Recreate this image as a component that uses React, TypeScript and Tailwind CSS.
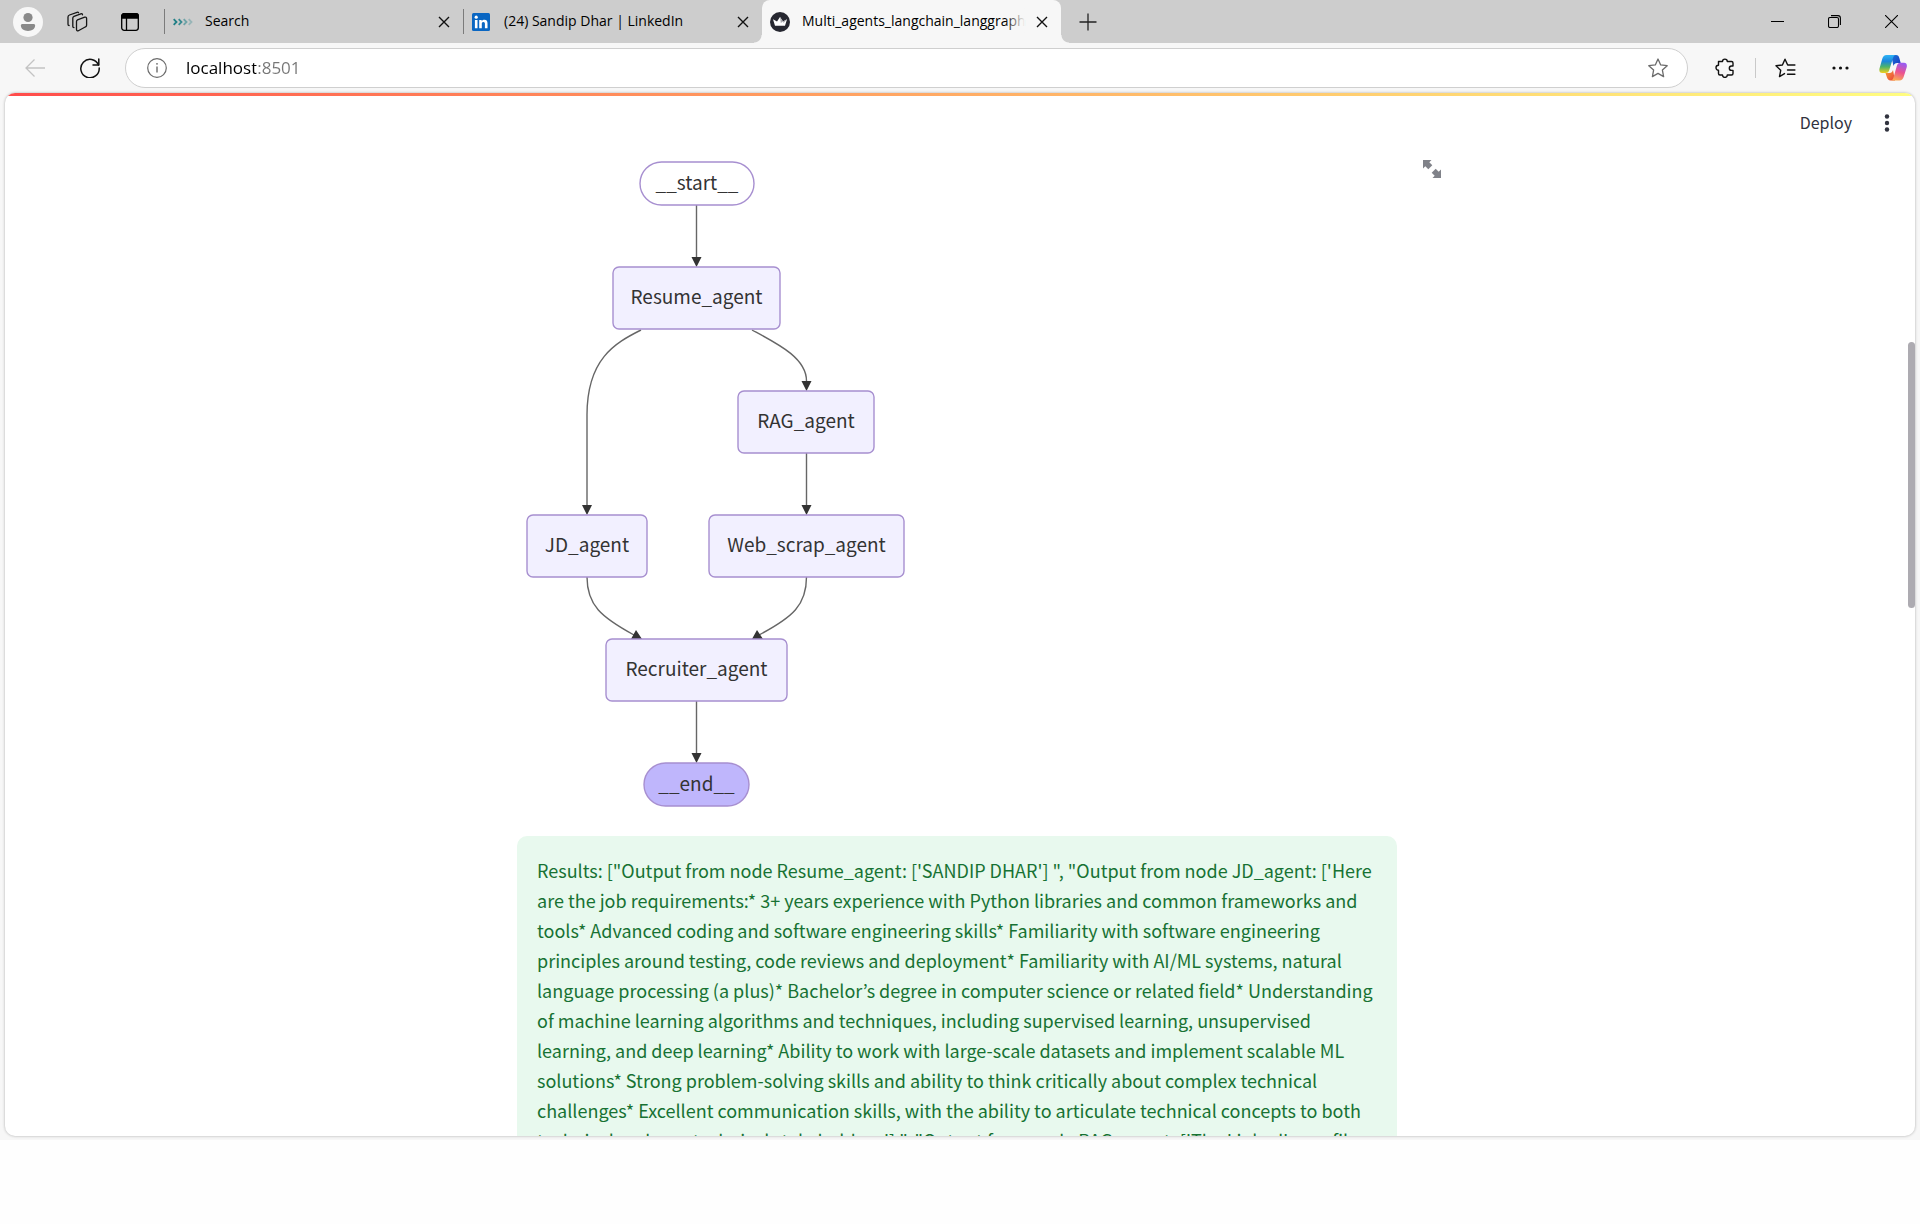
import type { ReactNode } from "react";

const RESULTS =
  "Results: [\"Output from node Resume_agent: ['SANDIP DHAR'] \", \"Output from node JD_agent: ['Here are the job requirements:* 3+ years experience with Python libraries and common frameworks and tools* Advanced coding and software engineering skills* Familiarity with software engineering principles around testing, code reviews and deployment* Familiarity with AI/ML systems, natural language processing (a plus)* Bachelor’s degree in computer science or related field* Understanding of machine learning algorithms and techniques, including supervised learning, unsupervised learning, and deep learning* Ability to work with large-scale datasets and implement scalable ML solutions* Strong problem-solving skills and ability to think critically about complex technical challenges* Excellent communication skills, with the ability to articulate technical concepts to both technical and non-technical stakeholders.'] \", \"Output from node RAG_agent: ['The LinkedIn profile";

function CloseIcon() {
  return (
    <svg width="12" height="12" viewBox="0 0 12 12" fill="none" stroke="#111" strokeWidth="1.4">
      <path d="M1 1l10 10M11 1L1 11" />
    </svg>
  );
}

function ChevronsFavicon() {
  return (
    <svg width="20" height="20" viewBox="0 0 20 20" fill="none" stroke="#1f7f86" strokeWidth="1.8">
      <path d="M.7 7.2l2.8 2.8-2.8 2.8" />
      <path d="M5.7 7.2l2.8 2.8-2.8 2.8" opacity=".85" />
      <path d="M10.7 7.2l2.8 2.8-2.8 2.8" opacity=".55" />
      <path d="M15.7 7.2l2.8 2.8-2.8 2.8" opacity=".3" />
    </svg>
  );
}

function LinkedInFavicon() {
  return (
    <svg width="18" height="18" viewBox="0 0 18 18">
      <rect width="18" height="18" rx="1.5" fill="#0a66c2" />
      <circle cx="4.2" cy="4.2" r="1.6" fill="#fff" />
      <path
        d="M2.9 7h2.6v8.3H2.9zM7.2 7h2.5v1.2c.4-.8 1.4-1.4 2.7-1.4 2.5 0 3.1 1.6 3.1 3.8v4.7h-2.6v-4.2c0-1.1-.2-2.1-1.5-2.1s-1.6.9-1.6 2v4.3H7.2z"
        fill="#fff"
      />
    </svg>
  );
}

function CrownFavicon() {
  return (
    <svg width="20" height="20" viewBox="0 0 20 20">
      <circle cx="10" cy="10" r="10" fill="#262730" />
      <path d="M3 7.2l4 2.3L10 5l3 4.5 4-2.3-2 6.6H5z" fill="#fff" />
      <path d="M10 5l3 4.500-2.200 1.400zM17 7.200l-4 2.300.6 1.400z" fill="#a9a9ae" />
    </svg>
  );
}

function Tab({ icon, title, label, className }: { icon: ReactNode; title: string; label: string; className: string }) {
  return (
    <div className={`flex h-full items-center ${className}`}>
      <button role="tab" className="flex min-w-0 flex-1 items-center text-left">
        <span className="flex w-8 shrink-0">{icon}</span>
        <span className="overflow-hidden pb-0.5 whitespace-nowrap text-[14px] leading-5 text-black">{title}</span>
      </button>
      <button aria-label={label} className="flex h-6 w-6 shrink-0 items-center justify-center">
        <CloseIcon />
      </button>
    </div>
  );
}

function TabStrip() {
  return (
    <header className="flex h-[43px] items-center bg-[#cdcdcd]">
      <button aria-label="Profile" className="ml-[13px] flex">
        <svg width="30" height="30" viewBox="0 0 30 30">
          <circle cx="15" cy="15" r="15" fill="#f7f7f7" />
          <circle cx="15" cy="10.5" r="4.6" fill="#8a8a8a" />
          <path d="M9.500 17h11c1 0 1.600.7 1.600 1.600 0 3.400-3 5.400-7.100 5.400s-7.100-2-7.100-5.400c0-.9.6-1.600 1.600-1.600z" fill="#8a8a8a" />
        </svg>
      </button>
      <button aria-label="Workspaces" className="ml-[23px] flex">
        <svg width="22" height="22" viewBox="0 0 22 22" fill="none" stroke="#151515" strokeWidth="1.3" strokeLinejoin="round" strokeLinecap="round">
          <path d="M11.500 8.800l7.200-2.600c1-.3 1.900.2 1.900 1.200v6.800c0 .7-.4 1.300-1 1.600l-7.200 3.900c-1 .5-1.900 0-1.900-1.100v-8.200c0-.7.4-1.300 1-1.600z" />
          <path d="M16.500 3.800c0-.9-.8-1.300-1.700-1l-6.800 2.500c-.7.300-1.200.9-1.200 1.600v8.600c0 .7.5 1.100 1.200 1.100" />
          <path d="M12.500 1.700c-.3-.5-.9-.6-1.500-.4L3.500 4c-.8.300-1.500 1-1.500 1.900v7.400c0 .7.400 1.200 1.100 1.200" />
        </svg>
      </button>
      <button aria-label="Tab actions" className="ml-[33px] flex">
        <svg width="18" height="18" viewBox="0 0 18 18" fill="none" stroke="#000" strokeWidth="1.300">
          <rect x=".7" y=".7" width="16.600" height="16.600" rx="2.500" />
          <path d="M.7 5V3A2.300 2.300 0 0 1 3 .7h12A2.300 2.300 0 0 1 17.300 3v2z" fill="#000" />
          <path d="M5.500 5v12" />
        </svg>
      </button>
      <span className="ml-[25px] h-[25px] w-px bg-[#7b7b7b]" />
      <Tab icon={<ChevronsFavicon />} title="Search" label="Close Search" className="w-[298px] pl-2 pr-[7px]" />
      <span className="h-[25px] w-px bg-[#7b7b7b]" />
      <Tab icon={<LinkedInFavicon />} title="(24) Sandip Dhar | LinkedIn" label="Close LinkedIn" className="w-[298px] pl-2 pr-[7px]" />
      <div className="relative h-full w-[299px] rounded-t-lg bg-[#f7f7f7]">
        <Tab
          icon={<CrownFavicon />}
          title="Multi_agents_langchain_langgraph"
          label="Close Multi_agents"
          className="pl-2 pr-[7px]"
        />
        <span className="absolute top-2 right-9 h-7 w-5 bg-linear-to-r from-transparent to-[#f7f7f7]" />
        <span className="absolute bottom-0 -left-2 size-2 bg-[radial-gradient(circle_at_0_0,#cdcdcd_7px,#f7f7f7_8px)]" />
        <span className="absolute -right-2 bottom-0 size-2 bg-[radial-gradient(circle_at_100%_0,#cdcdcd_7px,#f7f7f7_8px)]" />
      </div>
      <button aria-label="New tab" className="ml-[18px] flex">
        <svg width="18" height="18" viewBox="0 0 18 18" stroke="#222" strokeWidth="1.300">
          <path d="M9 .5v17M.5 9h17" />
        </svg>
      </button>
      <div className="ml-auto flex items-center gap-11 pr-[22px]">
        <button aria-label="Minimize" className="flex">
          <svg width="13" height="13" viewBox="0 0 13 13" stroke="#000"><path d="M0 6.500h13" /></svg>
        </button>
        <button aria-label="Restore" className="flex">
          <svg width="13" height="13" viewBox="0 0 13 13" fill="none" stroke="#000" strokeWidth="1.100">
            <rect x=".5" y="2.500" width="10" height="10" rx="1.500" />
            <path d="M3 .6h7a2.500 2.500 0 0 1 2.400 2.500V10" />
          </svg>
        </button>
        <button aria-label="Close window" className="flex">
          <svg width="13" height="13" viewBox="0 0 13 13" stroke="#000" strokeWidth="1.100"><path d="M0 0l13 13M13 0L0 13" /></svg>
        </button>
      </div>
    </header>
  );
}

function CopilotLogo() {
  return (
    <svg width="28" height="26" viewBox="0 0 28 26">
      <defs>
        <linearGradient id="cpLeft" x1="0" y1="0" x2="0" y2="1">
          <stop offset="0" stopColor="#2fb4f5" />
          <stop offset=".35" stopColor="#1b86dc" />
          <stop offset=".65" stopColor="#4bb36b" />
          <stop offset="1" stopColor="#f2cf1d" />
        </linearGradient>
        <linearGradient id="cpRight" x1=".6" y1="0" x2=".3" y2="1">
          <stop offset="0" stopColor="#9a5cf0" />
          <stop offset=".5" stopColor="#ec5390" />
          <stop offset="1" stopColor="#fbb04f" />
        </linearGradient>
        <linearGradient id="cpTop" x1="0" y1="0" x2="1" y2="1">
          <stop offset="0" stopColor="#1877d8" />
          <stop offset="1" stopColor="#1c37c0" />
        </linearGradient>
        <linearGradient id="cpBottom" x1="0" y1="0" x2="1" y2="1">
          <stop offset="0" stopColor="#f7a035" />
          <stop offset="1" stopColor="#e8403c" />
        </linearGradient>
      </defs>
      <path d="M12 0h5c2 0 2.800 1.200 3.400 3.200L21.700 8h-3.500c-2 0-3 .8-3.700 2.900z" fill="url(#cpTop)" />
      <path d="M16 25.500h-4.500c-2 0-3-1.200-3.600-3.200L6.500 18h4c2 0 2.800-1 3.500-3z" fill="url(#cpBottom)" />
      <path d="M7.500 0H17c-1.700 0-2.400 1.200-3 3l-3.700 12c-.8 2.400-1.800 3-3.600 3H3.200C.8 18-.1 16.200.5 13.500L3.200 4C4 1.300 5.300 0 7.500 0z" fill="url(#cpLeft)" />
      <path d="M20.500 25.500H11.500c1.700 0 2.400-1.200 3-3l3.300-11.500c.7-2.400 1.800-3.200 3.700-3.200H25c2.400 0 3.300 1.800 2.700 4.500l-2.900 9.300c-.8 2.700-2.100 3.900-4.300 3.900z" fill="url(#cpRight)" />
    </svg>
  );
}

function Toolbar() {
  return (
    <nav className="flex h-[50px] items-center pl-[25px] pr-[13px]">
      <button aria-label="Back" className="flex">
        <svg width="20" height="18" viewBox="0 0 20 18" fill="none" stroke="#c3c3c3" strokeWidth="1.300">
          <path d="M9.500.5L1 9l8.500 8.500M1 9h19" />
        </svg>
      </button>
      <button aria-label="Refresh" className="ml-[35px] flex">
        <svg width="20" height="20" viewBox="0 0 20 20" fill="none" stroke="#111" strokeWidth="1.500" strokeLinecap="round" strokeLinejoin="round">
          <path d="M18.500 7A9.200 9.200 0 1 0 19.200 10" />
          <path d="M18.800 1v5.900h-5.800" />
        </svg>
      </button>
      <div className="ml-[25px] flex h-10 flex-1 items-center rounded-full border border-[#cfcfcf] bg-white pr-[19px] pl-[21px]">
        <button aria-label="Site information" className="flex">
          <svg width="20" height="20" viewBox="0 0 20 20" fill="none" stroke="#6b6b6b" strokeWidth="1.200">
            <circle cx="10" cy="10" r="9.300" />
            <path d="M10 8.500v6" strokeWidth="1.400" />
            <circle cx="10" cy="5.800" r=".9" fill="#6b6b6b" stroke="none" />
          </svg>
        </button>
        <input
          aria-label="Address"
          defaultValue="localhost:8501"
          className="ml-[19px] min-w-0 flex-1 bg-[linear-gradient(90deg,#000_70px,#767676_70px)] bg-clip-text text-[17px] leading-6 text-transparent outline-none"
        />
        <button aria-label="Add to favorites" className="flex">
          <svg width="20" height="20" viewBox="0 0 20 20" fill="none" stroke="#6b6b6b" strokeWidth="1.300" strokeLinejoin="round">
            <path d="M10 1l2.700 5.900 6.500.8-4.800 4.400 1.200 6.500L10 15.400l-5.600 3.200 1.200-6.500L.8 7.700l6.500-.8z" />
          </svg>
        </button>
      </div>
      <button aria-label="Extensions" className="ml-[27px] flex">
        <svg width="20" height="20" viewBox="0 0 20 20" fill="none" stroke="#111" strokeWidth="1.400" strokeLinejoin="round">
          <path d="M3.500 3.500h4a2.400 2.400 0 0 1 4.800 0h4.200a1.500 1.500 0 0 1 1.500 1.500v3h-1.500a2.200 2.200 0 0 0 0 4.400H18V15.500a1.500 1.500 0 0 1-1.500 1.500h-4.200a2.400 2.400 0 0 1-4.800 0h-2.500a1.500 1.500 0 0 1-1.500-1.500v-3.200a2.500 2.500 0 0 1 0-5z" />
        </svg>
      </button>
      <span className="ml-5 h-5 w-px bg-[#c9c9c9]" />
      <button aria-label="Favorites" className="ml-[19px] flex">
        <svg width="21" height="20" viewBox="0 0 21 20" fill="none" stroke="#111" strokeWidth="1.400" strokeLinejoin="round" strokeLinecap="round">
          <path d="M9.500 15.600l-5 3 1.200-6.300L1 7.800l6.400-.8L10 1.200 12.700 7h7.200M12.500 12h7.400M12.500 16.300h7.400" />
        </svg>
      </button>
      <button aria-label="Settings and more" className="ml-9 flex">
        <svg width="17" height="4" viewBox="0 0 17 4" fill="#111">
          <circle cx="2" cy="2" r="1.600" />
          <circle cx="8.500" cy="2" r="1.600" />
          <circle cx="15" cy="2" r="1.600" />
        </svg>
      </button>
      <button aria-label="Copilot" className="ml-[30px] flex">
        <CopilotLogo />
      </button>
    </nav>
  );
}

const NODES = [
  { label: "__start__", x: 123, y: 9, w: 114, h: 43, r: 21.5, fill: "#ffffff" },
  { label: "Resume_agent", x: 96, y: 114, w: 167, h: 62, r: 6, fill: "#f2f0ff" },
  { label: "RAG_agent", x: 221, y: 238, w: 136, h: 62, r: 6, fill: "#f2f0ff" },
  { label: "JD_agent", x: 10, y: 362, w: 120, h: 62, r: 6, fill: "#f2f0ff" },
  { label: "Web_scrap_agent", x: 192, y: 362, w: 195, h: 62, r: 6, fill: "#f2f0ff" },
  { label: "Recruiter_agent", x: 89, y: 486, w: 181, h: 62, r: 6, fill: "#f2f0ff" },
  { label: "__end__", x: 127, y: 610, w: 105, h: 43, r: 21.5, fill: "#bfb6fc" },
];

function AgentGraph() {
  return (
    <svg width="400" height="664" viewBox="0 0 400 664" role="img" aria-label="Agent graph">
      <g fill="none" stroke="#666" strokeWidth="1.400">
        <path d="M179.500 52v52M289.500 300v52M179.500 548v52" />
        <path d="M124 177C98 190 70 206 70 262V352" />
        <path d="M235 177C261 191 289.500 205 289.500 228" />
        <path d="M70 424C70 452 84 464 117 482" />
        <path d="M289.500 424C289.500 452 276 464 242 482" />
      </g>
      <g fill="#333">
        <path d="M174.500 104h10l-5 10zM284.500 228h10l-5 10zM284.500 352h10l-5 10zM65 352h10l-5 10zM174.500 600h10l-5 10z" />
        <path d="M114 486l5-9 6 9zM235 486l5-9 6 9z" />
      </g>
      {NODES.map((n) => (
        <g key={n.label}>
          <rect x={n.x} y={n.y} width={n.w} height={n.h} rx={n.r} fill={n.fill} stroke="#a78fd0" strokeWidth="1.400" />
          <text
            x={n.x + n.w / 2}
            y={n.y + n.h / 2 + 6}
            textAnchor="middle"
            fill="#333"
            className="font-['Trebuchet_MS','Noto_Sans_CJK_KR',sans-serif] text-[19px]"
          >
            {n.label}
          </text>
        </g>
      ))}
    </svg>
  );
}

function StreamlitPage() {
  return (
    <main className="relative mx-[5px] flex min-h-0 flex-1 flex-col overflow-hidden rounded-[10px] bg-white font-['Source_Sans_Pro','Noto_Sans_CJK_KR',sans-serif] shadow-[0_0_3px_rgba(0,0,0,0.3)]">
      <div className="h-[3px] shrink-0 bg-linear-to-r from-[#ff4b4b] to-[#fffd80]" />
      <div className="flex h-[54px] shrink-0 items-center justify-end pr-[25px]">
        <button className="pb-0.5 text-[16px] leading-6 text-[#31333f]">Deploy</button>
        <button aria-label="Main menu" className="ml-8 flex">
          <svg width="6" height="18" viewBox="0 0 6 18" fill="#31333f">
            <circle cx="3" cy="2.500" r="2.200" />
            <circle cx="3" cy="9" r="2.200" />
            <circle cx="3" cy="15.500" r="2.200" />
          </svg>
        </button>
      </div>
      <div className="mx-auto w-full max-w-[886px] pt-[3px] pr-[6px]">
        <div className="relative">
          <AgentGraph />
          <button aria-label="View fullscreen" className="absolute top-[7px] -right-11 flex">
            <svg width="18" height="18" viewBox="0 0 18 18" fill="#808289">
              <path d="M0 0h8.500L6.300 2.300 9.300 5.300 5.300 9.300 2.300 6.300 0 8.500zM18 18H9.500l2.200-2.300-3-3 4-4 3 3L18 9.500z" />
            </svg>
          </button>
        </div>
        <p className="mt-[19px] rounded-[10px] bg-[#e8f9ee] px-5 pt-[19px] pb-5 text-[18px] leading-[30px] text-[#177233]">{RESULTS}</p>
      </div>
      <span className="absolute top-[249px] right-0 h-[266px] w-[7px] rounded-full bg-[#adabb1]" />
    </main>
  );
}

export default function App() {
  return (
    <div className="flex h-screen flex-col bg-[#fefefe] pb-[84px] font-['Segoe_UI','Open_Sans',sans-serif]">
      <div className="flex min-h-0 flex-1 flex-col bg-[#f7f7f7] pb-1">
        <TabStrip />
        <Toolbar />
        <StreamlitPage />
      </div>
    </div>
  );
}
